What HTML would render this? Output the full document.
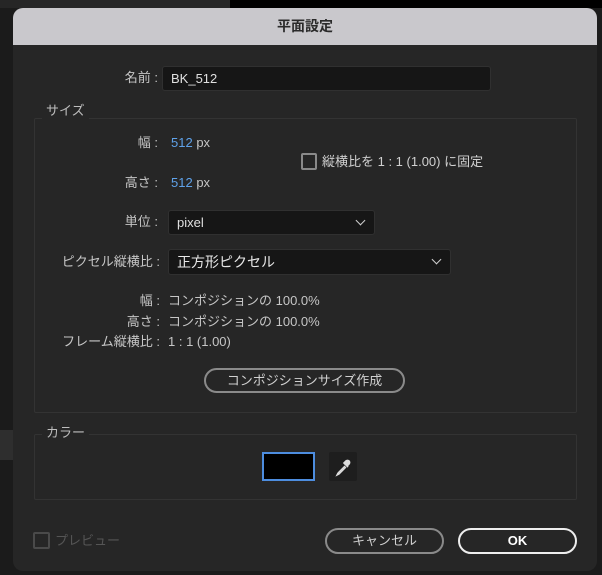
<!DOCTYPE html>
<html><head><meta charset="utf-8"><style>
*{margin:0;padding:0;box-sizing:border-box}
body{width:602px;height:575px;background:#1b1b1b;position:relative;overflow:hidden;font-family:"Liberation Sans","Noto Sans CJK JP",sans-serif;font-size:13px;line-height:16px;color:#c6c6c6}
.a{position:absolute;white-space:nowrap}
.dlg{left:13px;top:8px;width:584px;height:563px;background:#262626;border-radius:10px;overflow:hidden}
.tb{left:0;top:0;width:584px;height:37px;background:#c9c8cc;color:#2a2a2a;font-weight:bold;font-size:14px;text-align:center;line-height:37px}
.r{text-align:right}
.b{color:#5fa2ea}
.field{background:#161616;border:1px solid #303030;border-radius:3px}
.grp{border:1px solid #333;border-radius:2px}
.gl{background:#262626;padding:0 4px;color:#bdbdbd}
.chev{position:absolute;right:10px;top:6px;width:7px;height:7px;border-right:1.5px solid #cfcfcf;border-bottom:1.5px solid #cfcfcf;transform:rotate(45deg)}
.btn{border:2px solid #8a8a8a;border-radius:13px;text-align:center;color:#d0d0d0}
</style></head><body>
<div class="a" style="left:0;top:0;width:230px;height:8px;background:#262626"></div>
<div class="a" style="left:230px;top:0;width:372px;height:8px;background:#000"></div>
<div class="a" style="left:0;top:430px;width:13px;height:30px;background:#2e2e2e"></div>
<div class="a dlg">
 <div class="a tb">平面設定</div>
</div>
<div class="a r" style="left:60px;top:70px;width:98px">名前 :</div>
<div class="a field" style="left:162px;top:66px;width:329px;height:25px;padding:4px 8px;color:#e0e0e0">BK_512</div>

<div class="a grp" style="left:34px;top:118px;width:543px;height:295px"></div>
<div class="a gl" style="left:42px;top:103px">サイズ</div>
<div class="a r" style="left:60px;top:135px;width:98px">幅 :</div>
<div class="a" style="left:171px;top:135px"><span class="b">512</span> px</div>
<div class="a r" style="left:60px;top:175px;width:98px">高さ :</div>
<div class="a" style="left:171px;top:175px"><span class="b">512</span> px</div>
<div class="a" style="left:301px;top:153px;width:16px;height:17px;border:2px solid #8a8a8a;border-radius:2px"></div>
<div class="a" style="left:322px;top:154px;color:#d0d0d0">縦横比を 1 : 1 (1.00) に固定</div>

<div class="a r" style="left:60px;top:214px;width:98px">単位 :</div>
<div class="a field" style="left:168px;top:210px;width:207px;height:25px;padding:4px 8px;color:#e0e0e0">pixel<div class="chev"></div></div>
<div class="a r" style="left:20px;top:254px;width:140px">ピクセル縦横比 :</div>
<div class="a field" style="left:168px;top:249px;width:283px;height:26px;padding:4px 8px;color:#e8e8e8;font-size:14px">正方形ピクセル<div class="chev"></div></div>

<div class="a r" style="left:20px;top:293px;width:140px">幅 :</div>
<div class="a" style="left:168px;top:293px">コンポジションの 100.0%</div>
<div class="a r" style="left:20px;top:314px;width:140px">高さ :</div>
<div class="a" style="left:168px;top:314px">コンポジションの 100.0%</div>
<div class="a r" style="left:20px;top:334px;width:140px">フレーム縦横比 :</div>
<div class="a" style="left:168px;top:334px">1 : 1 (1.00)</div>
<div class="a btn" style="left:204px;top:368px;width:201px;height:25px;line-height:21px">コンポジションサイズ作成</div>

<div class="a grp" style="left:34px;top:434px;width:543px;height:66px"></div>
<div class="a gl" style="left:42px;top:425px">カラー</div>
<div class="a" style="left:262px;top:452px;width:53px;height:29px;background:#000;border:2px solid #4d8ddf"></div>
<div class="a" style="left:329px;top:452px;width:28px;height:29px;background:#1e1e1e;border-radius:2px">
<svg width="28" height="29" viewBox="0 0 28 29"><path d="M9 21 L16 14 M9 21 l-1 2 2 -1 7-7" stroke="#ddd" stroke-width="1.4" fill="none"/><path d="M15 11 l4 4 M17 9 a2 2 0 0 1 3 3 l-2 2 -3-3z" stroke="#ddd" stroke-width="1.6" fill="#ddd"/></svg></div>

<div class="a" style="left:33px;top:532px;width:17px;height:17px;border:2px solid #4a4a4a;border-radius:2px"></div>
<div class="a" style="left:55px;top:533px;color:#555">プレビュー</div>
<div class="a btn" style="left:325px;top:528px;width:119px;height:26px;line-height:22px">キャンセル</div>
<div class="a btn" style="left:458px;top:528px;width:119px;height:26px;line-height:22px;border-color:#eee;color:#fff;font-weight:bold">OK</div>
</body></html>
